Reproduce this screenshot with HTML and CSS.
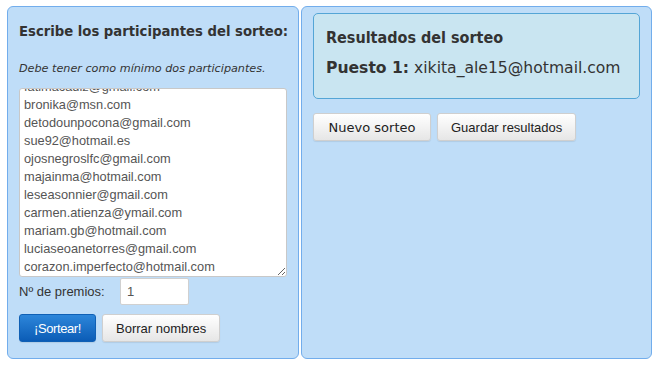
FILE: index.html
```html
<!DOCTYPE html>
<html lang="es">
<head>
  <meta charset="UTF-8" />
  <title>Sorteo</title>
  <link rel="stylesheet" href="styles.css">
</head>
<body>
  <div class="wrap">
    <div class="panel panel-left">
      <h2>Escribe los participantes del sorteo:</h2>
      <p class="hint">Debe tener como mínimo dos participantes.</p>
      <textarea id="names">xikita_ale15@hotmail.com
fatimacadiz@gmail.com
bronika@msn.com
detodounpocona@gmail.com
sue92@hotmail.es
ojosnegroslfc@gmail.com
majainma@hotmail.com
leseasonnier@gmail.com
carmen.atienza@ymail.com
mariam.gb@hotmail.com
luciaseoanetorres@gmail.com
corazon.imperfecto@hotmail.com</textarea>
      <div class="prizes">
        <label for="prizes">Nº de premios:</label>
        <input type="text" id="prizes" value="1">
      </div>
      <div class="actions">
        <button class="btn btn-primary">¡Sortear!</button>
        <button class="btn">Borrar nombres</button>
      </div>
    </div>
    <div class="panel panel-right">
      <div class="results">
        <h3>Resultados del sorteo</h3>
        <p><b>Puesto 1:</b> xikita_ale15@hotmail.com</p>
      </div>
      <div class="actions">
        <button class="btn btn-wide">Nuevo sorteo</button>
        <button class="btn">Guardar resultados</button>
      </div>
    </div>
  </div>

  <script>
    const names = document.getElementById('names');
    names.scrollTop = names.scrollHeight;
  </script>
</body>
</html>
```

FILE: styles.css
```css
/* Base */
* { margin: 0; padding: 0; box-sizing: border-box; }
body { font-family: "Liberation Sans", Arial, sans-serif; font-size: 13px; color: #333; background: #fff; padding: 6px 9px 8px 7px; }

.wrap { display: flex; gap: 2px; height: 353px; }

/* Panels */
.panel { background: #bfddf8; border: 1px solid #72adec; border-radius: 6px; }
.panel-left { width: 292px; padding: 12px 11px 0 11px; }
.panel-right { width: 351px; padding: 6px 11px 0 11px; }

.panel-left h2 { font-family: "DejaVu Sans Condensed", "DejaVu Sans", sans-serif; font-size: 14.7px; font-weight: bold; line-height: 24px; white-space: nowrap; }
.hint { font-family: "DejaVu Sans", Verdana, sans-serif; font-style: italic; font-size: 11.2px; margin-top: 19px; line-height: 14px; }

textarea { display: block; width: 268px; height: 189px; margin-top: 12px; padding: 0 4px; border: 1px solid #c8c8c8; border-radius: 3px; font-family: "Liberation Sans", Arial, sans-serif; font-size: 12.8px; line-height: 18px; color: #555; background: #fff; resize: vertical; overflow: hidden; }

.prizes { display: flex; align-items: center; margin-top: 1px; }
.prizes label { width: 101px; font-size: 13px; }
.prizes input { width: 69px; height: 27px; border: 1px solid #d0d0d0; border-radius: 2px; padding: 0 6px; font-family: "Liberation Sans", Arial, sans-serif; font-size: 13px; color: #555; background: #fff; }

/* Buttons */
.actions { display: flex; gap: 6px; margin-top: 9px; }
.btn { height: 28px; padding: 0 13px; font-family: "Liberation Sans", Arial, sans-serif; font-size: 13px; color: #222; white-space: nowrap; background: linear-gradient(#ffffff, #e6e6e6); border: 1px solid #cfcfcf; border-radius: 3px; box-shadow: 0 1px 1px rgba(0,0,0,0.08); }
.btn-primary { width: 77px; padding: 0; color: #fff; background: linear-gradient(#2d86da, #0b5cb6); border-color: #1060b5; letter-spacing: -0.4px; }
.btn-wide { width: 118px; padding: 0; font-family: "DejaVu Sans", Verdana, sans-serif; font-size: 13px; }

/* Results */
.results { height: 86px; background: #c9e5f1; border: 1px solid #54a5d6; border-radius: 5px; padding: 12px 12px; font-family: "DejaVu Sans", Verdana, sans-serif; }
.results h3 { font-family: "DejaVu Sans Condensed", "DejaVu Sans", sans-serif; font-size: 16px; font-weight: bold; line-height: 24px; }
.results p { font-size: 15.6px; margin-top: 8px; line-height: 20px; white-space: nowrap; }
.panel-right .actions { margin-top: 14px; }
```
